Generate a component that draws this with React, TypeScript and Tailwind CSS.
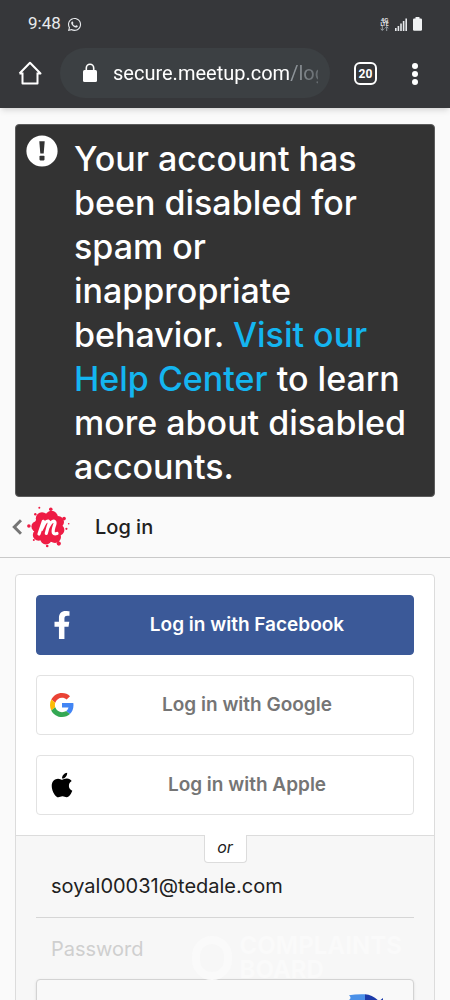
import React, { useState } from "react";
import { FaApple, FaFacebookF, FaWhatsapp } from "react-icons/fa";

interface SocialButtonProps {
  label: string;
  icon: React.ReactNode;
  className: string;
}

const HomeIcon = () => (
  <svg viewBox="0 0 24 24" className="h-6 w-6" fill="none" stroke="white" strokeWidth="2" strokeLinejoin="round">
    <path d="M4.5 11.5V22.5H19.5V11.5M1.5 12.5L12 1.8L22.5 12.5H19.5M1.5 12.5H4.5" />
  </svg>
);

const LockIcon = () => (
  <svg viewBox="0 0 16 20" className="h-5 w-4 shrink-0">
    <rect x="1" y="7" width="14" height="12" rx="1.5" fill="white" />
    <path d="M4.3 8V5a3.7 3.7 0 0 1 7.4 0v3" fill="none" stroke="white" strokeWidth="1.6" />
  </svg>
);

const SignalIcon = () => (
  <svg viewBox="0 0 12 13" className="h-[13px] w-3" fill="#e8eaed">
    <rect x="0" y="10" width="1.6" height="3" />
    <rect x="2.6" y="8" width="1.6" height="5" />
    <rect x="5.2" y="5.5" width="1.6" height="7.5" />
    <rect x="7.8" y="3" width="1.6" height="10" />
    <rect x="10.4" y="0.5" width="1.6" height="12.5" />
  </svg>
);

const BatteryIcon = () => (
  <svg viewBox="0 0 9 14" className="h-[14px] w-[9px]" fill="#f1f3f4">
    <rect x="2.5" y="0" width="4" height="3" rx="0.5" />
    <rect x="0" y="1.4" width="9" height="12.4" rx="1.2" />
  </svg>
);

const DataArrowsIcon = () => (
  <svg viewBox="0 0 9 5" className="h-[5px] w-[9px]" fill="none" stroke="#9aa0a6" strokeWidth="1">
    <path d="M2.3 0V4.3M0.6 2.7L2.3 4.4L4 2.7M6.7 5V0.7M5 2.3L6.7 0.6L8.4 2.3" />
  </svg>
);

const AlertIcon = () => (
  <svg viewBox="0 0 32 32" className="h-8 w-8 shrink-0">
    <circle cx="16" cy="16" r="15.6" fill="white" />
    <path d="M13.3 6.2h5.4l-1 12.3h-3.4z" fill="#333333" />
    <rect x="13.5" y="20.8" width="5" height="4.6" rx="0.8" fill="#333333" />
  </svg>
);

const BackIcon = () => (
  <svg viewBox="0 0 10 16" className="h-4 w-[10px]" fill="none" stroke="#757575" strokeWidth="3">
    <path d="M9 1.2L2.3 8L9 14.8" />
  </svg>
);

const MeetupLogo = () => (
  <svg viewBox="0 0 44 42" className="h-[42px] w-11">
    <g fill="#ee1c44">
      <circle cx="21" cy="21.5" r="14" />
      <circle cx="15" cy="12.5" r="6.2" />
      <circle cx="24.5" cy="11.2" r="6.4" />
      <circle cx="31" cy="16" r="6" />
      <circle cx="31.6" cy="24" r="5.8" />
      <circle cx="28" cy="31" r="6" />
      <circle cx="19" cy="32.6" r="5.8" />
      <circle cx="11.6" cy="29" r="5.8" />
      <circle cx="9.6" cy="20.5" r="5.2" />
      <circle cx="12.3" cy="1.8" r="1" />
      <circle cx="23.8" cy="3.2" r="1.8" />
      <circle cx="8.3" cy="8.2" r="1.2" />
      <circle cx="37.1" cy="12.6" r="1.8" />
      <circle cx="41.7" cy="17.8" r="0.8" />
      <circle cx="1.9" cy="20" r="1.8" />
      <circle cx="39.4" cy="22.8" r="1.1" />
      <circle cx="6.8" cy="34" r="1" />
      <circle cx="31.8" cy="37.6" r="2.1" />
      <circle cx="20.2" cy="40" r="1.3" />
    </g>
    <path
      d="M12 28L16.3 15.3Q15.6 20 14.7 23.2M15.5 21.5Q18.5 14.6 21.2 15Q23 15.7 21.3 20L19.3 27.4M20.6 22.3Q24.6 14.5 27.1 15.2Q28.8 16 27.4 19.6Q25.6 25 26.4 27Q27.2 28.4 30 27.5"
      fill="none"
      stroke="white"
      strokeWidth="3.2"
      strokeLinecap="round"
      strokeLinejoin="round"
    />
  </svg>
);

const GoogleIcon = () => (
  <svg viewBox="0 0 48 48" className="h-6 w-6">
    <path fill="#EA4335" d="M24 9.5c3.54 0 6.71 1.22 9.21 3.6l6.85-6.85C35.9 2.38 30.47 0 24 0 14.62 0 6.51 5.38 2.56 13.22l7.98 6.19C12.43 13.72 17.74 9.5 24 9.5z" />
    <path fill="#4285F4" d="M46.98 24.55c0-1.57-.15-3.09-.38-4.55H24v9.02h12.94c-.58 2.96-2.26 5.48-4.78 7.18l7.73 6c4.51-4.18 7.09-10.36 7.09-17.65z" />
    <path fill="#FBBC05" d="M10.53 28.59c-.48-1.45-.76-2.99-.76-4.59s.27-3.14.76-4.59l-7.98-6.19C.92 16.46 0 20.12 0 24c0 3.88.92 7.54 2.56 10.78l7.97-6.19z" />
    <path fill="#34A853" d="M24 48c6.48 0 11.93-2.13 15.89-5.81l-7.73-6c-2.15 1.45-4.92 2.3-8.16 2.3-6.26 0-11.57-4.22-13.47-9.91l-7.98 6.19C6.51 42.62 14.62 48 24 48z" />
  </svg>
);

const CaptchaIcon = () => (
  <svg viewBox="0 0 36 36" className="h-9 w-9">
    <path d="M1 1.2Q8 0 17 0.3V9Q10 9 8 14L1 6Q4 4 1 1.2z" fill="#4a90e8" />
    <path d="M17 0.3Q25 1 31 7.2L35 4V18H21L26 13Q23 9 17 9z" fill="#1c3aa9" />
    <path d="M1 9L8 16Q8 27 18 27Q23 27 26 23L22 19H34V33L31 29Q26 35 18 35Q1 34 1 18z" fill="#ababab" />
  </svg>
);

const SocialButton: React.FC<SocialButtonProps> = ({ label, icon, className }) => (
  <button
    type="button"
    className={`flex h-[60px] w-full items-center rounded border px-[11px] text-[19px] font-semibold ${className}`}
  >
    <span className="flex w-7 shrink-0 justify-center">{icon}</span>
    <span className="flex-1 pl-4 text-center">{label}</span>
  </button>
);

const BrowserBar = () => (
  <header className="relative z-10 bg-[#36373a] font-[Roboto,sans-serif] text-white shadow-md">
    <div className="flex h-12 items-center justify-between px-7 text-[#e8eaed]">
      <div className="flex items-center gap-[6px]">
        <span className="text-[17px]">9:48</span>
        <FaWhatsapp size={15} />
      </div>
      <div className="flex items-center gap-[6px]">
        <div className="flex flex-col items-center">
          <span className="text-[6px] leading-[5px] font-bold">4G</span>
          <span className="text-[5px] leading-[4px] font-bold">LTE</span>
          <DataArrowsIcon />
        </div>
        <SignalIcon />
        <BatteryIcon />
      </div>
    </div>

    <div className="flex h-[60px] items-start pr-8 pl-[18px]">
      <button type="button" aria-label="Home" className="mt-[13px]">
        <HomeIcon />
      </button>
      <div className="mr-6 ml-[18px] flex h-[50px] min-w-0 flex-1 items-center gap-[15px] rounded-full bg-[#3c4043] pr-3 pl-[22px]">
        <LockIcon />
        <div className="min-w-0 flex-1 overflow-hidden text-xl whitespace-nowrap [mask-image:linear-gradient(to_right,black_85%,transparent_112%)]">
          secure.meetup.com<span className="text-[#9aa0a6]">/login</span>
        </div>
      </div>
      <button
        type="button"
        aria-label="Tabs"
        className="mt-[14px] flex h-[23px] w-[23px] items-center justify-center rounded-md border-2 border-white text-xs font-bold"
      >
        20
      </button>
      <button type="button" aria-label="Menu" className="mt-[15px] ml-[35px] flex w-[6px] flex-col gap-[2px]">
        <span className="h-[6px] w-[6px] rounded-full bg-white" />
        <span className="h-[6px] w-[6px] rounded-full bg-white" />
        <span className="h-[6px] w-[6px] rounded-full bg-white" />
      </button>
    </div>
  </header>
);

const App: React.FC = () => {
  const [email, setEmail] = useState("soyal00031@tedale.com");
  const [password, setPassword] = useState("");

  return (
    <div className="h-screen overflow-hidden bg-[#fafafa] font-[Inter,sans-serif] text-[#212121]">
      <BrowserBar />

      {/* Account notice */}
      <div
        role="alert"
        className="mx-[15px] mt-4 flex gap-4 rounded-sm border border-[#5c5c5c] bg-[#333333] pt-[10px] pr-3 pb-[7px] pl-[10px] text-white"
      >
        <AlertIcon />
        <p className="mt-[2px] text-[34px] leading-[44px] font-medium">
          Your account has been disabled for spam or inappropriate behavior.{" "}
          <a href="#help" className="text-[#14b5f0]">Visit our Help Center</a> to learn more about disabled accounts.
        </p>
      </div>

      {/* Page title */}
      <div className="flex h-[61px] items-center border-b border-[#c9c9c9] pl-3">
        <a href="#back" aria-label="Back" className="flex items-center gap-[5px]">
          <BackIcon />
          <MeetupLogo />
        </a>
        <h1 className="ml-6 text-xl font-medium">Log in</h1>
      </div>

      <main className="mx-[15px] mt-4 rounded border border-[#dcdcdc] bg-white">
        <div className="flex flex-col gap-5 p-5">
          <SocialButton
            label="Log in with Facebook"
            icon={<FaFacebookF size={28} />}
            className="border-[#3b5998] bg-[#3b5998] text-white"
          />
          <SocialButton label="Log in with Google" icon={<GoogleIcon />} className="border-[#e2e2e2] text-[#757575]" />
          <SocialButton
            label="Log in with Apple"
            icon={<FaApple size={28} className="text-black" />}
            className="border-[#e2e2e2] text-[#757575]"
          />
        </div>

        <form className="border-t border-[#dcdcdc] bg-[#f7f7f7] px-5 pb-6">
          <div className="mx-auto -mt-px flex h-7 w-[43px] items-center justify-center rounded-b border border-t-0 border-[#dcdcdc] bg-white pb-1 text-base italic">
            or
          </div>
          <input
            type="email"
            aria-label="Email"
            value={email}
            onChange={(e) => setEmail(e.target.value)}
            className="h-[55px] w-full border-b border-[#d6d6d6] bg-transparent px-[15px] pb-2 text-xl outline-none"
          />
          <div className="relative">
            <input
              type="password"
              aria-label="Password"
              placeholder="Password"
              value={password}
              onChange={(e) => setPassword(e.target.value)}
              className="h-[61px] w-full bg-transparent px-[15px] text-xl outline-none placeholder:text-[#cfcfcf]"
            />
            {/* Watermark */}
            <div className="pointer-events-none absolute top-4 right-3 flex items-center gap-2 text-[#fafafa]">
              <span className="h-11 w-10 rounded-full border-8 border-[#fafafa]" />
              <span className="text-2xl leading-6 font-bold">
                COMPLAINTS
                <br />
                BOARD
              </span>
            </div>
          </div>
          <div className="flex h-[90px] items-start justify-end rounded border border-[#d3d3d3] bg-[#f9f9f9] pt-[14px] pr-[29px] shadow-sm">
            <CaptchaIcon />
          </div>
        </form>
      </main>
    </div>
  );
};

export default App;
